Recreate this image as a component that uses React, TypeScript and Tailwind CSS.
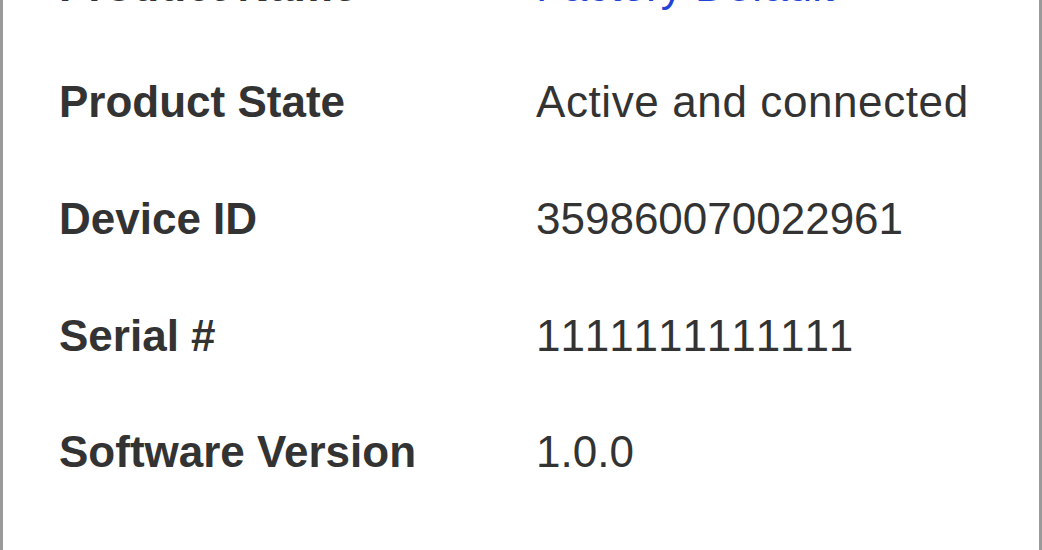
import React from "react";

const rows = [
  { label: "Product Name", value: "Factory Default", link: true, h: "h-[115px]", track: "" },
  { label: "Product State", value: "Active and connected", h: "h-[117px]", track: "tracking-[0.6px]" },
  { label: "Device ID", value: "359860070022961", h: "h-[117px]", track: "" },
  { label: "Serial #", value: "1111111111111", h: "h-[117px]", track: "tracking-[3.2px]" },
  { label: "Software Version", value: "1.0.0", h: "h-[114px]", track: "" },
  { label: "", value: "1.0.0", h: "h-[117px]", track: "" },
];

const App = () => {
  return (
    <div className="w-[1042px] h-[550px] overflow-hidden bg-white border-x-[3px] border-[#9a9a9a] font-['Liberation_Sans',Arial,sans-serif]">
      <div className="flex flex-col -mt-[72px]">
        {rows.map((row, i) => (
          <div key={i} className={`flex ${row.h} items-center pl-[56px] overflow-visible`}>
            <p className="w-[477px] shrink-0 text-[44px] leading-[117px] font-bold text-[#333333] whitespace-nowrap">
              {row.label}
            </p>
            <p
              className={
                row.link
                  ? "text-[44px] leading-[117px] text-[#1f44d6] whitespace-nowrap"
                  : `text-[44px] leading-[117px] text-[#333333] whitespace-nowrap ${row.track}`
              }
            >
              {row.value}
            </p>
          </div>
        ))}
      </div>
    </div>
  );
};

export default App;
